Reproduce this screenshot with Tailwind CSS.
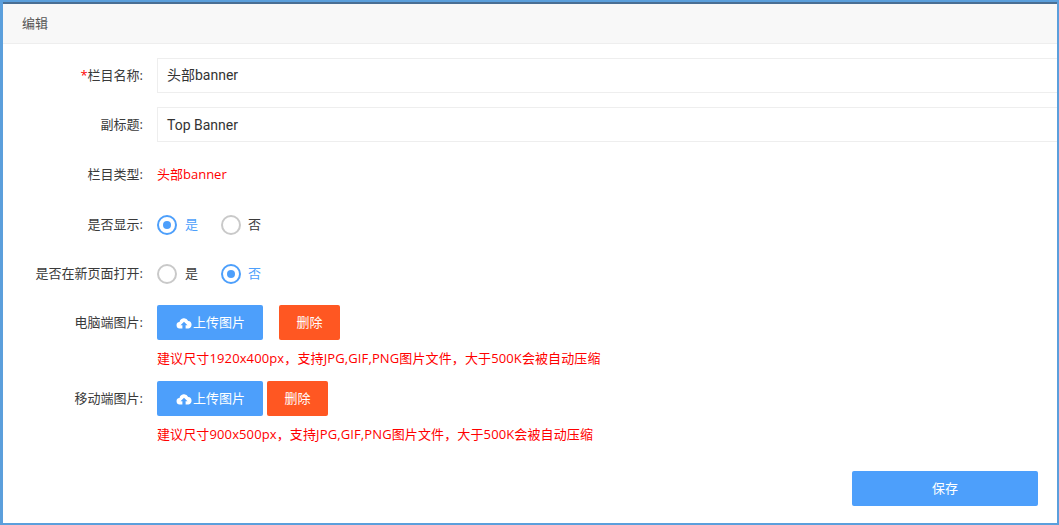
<!DOCTYPE html>
<html lang="zh-CN">
<head>
  <meta charset="UTF-8">
  <title>编辑</title>
  <script src="https://cdn.jsdelivr.net/npm/@tailwindcss/browser@4"></script>
</head>
<body class="bg-white overflow-hidden font-['Open_Sans','Noto_Sans_CJK_SC',sans-serif] text-[13px] text-[#3a3a3a]">
  <div class="w-[1059px] h-[525px] overflow-hidden border-2 border-l-[3px] border-[#5b9fdc] flex flex-col">
    <div class="h-[42px] shrink-0 border-t-2 border-t-[#4a6f94] bg-[#f8f8f8] border-b border-b-[#eeeeee] pl-[19px] flex items-center text-[#555]">编辑</div>
    <div class="flex flex-col pt-[14px]">
      <!-- name -->
      <div class="flex items-center h-[35px]">
        <label class="w-[140px] text-right shrink-0"><span class="text-[#ff0000]">*</span>栏目名称:</label>
        <div class="ml-[14px] flex-1 h-full border border-[#eeeeee] border-r-0 flex items-center pl-[9px] text-[14px] text-[#333] font-['Roboto','Noto_Sans_CJK_SC',sans-serif]">头部banner</div>
      </div>
      <div class="flex items-center h-[35px] mt-[14px]">
        <label class="w-[140px] text-right shrink-0">副标题:</label>
        <div class="ml-[14px] flex-1 h-full border border-[#eeeeee] border-r-0 flex items-center pl-[9px] pt-[2px] text-[14px] text-[#333] font-['Roboto','Noto_Sans_CJK_SC',sans-serif]">Top Banner</div>
      </div>
      <!-- type -->
      <div class="flex items-center h-[35px] mt-[15px]">
        <label class="w-[140px] text-right shrink-0">栏目类型:</label>
        <div class="ml-[14px] text-[#ff0000]">头部banner</div>
      </div>
      <!-- show -->
      <div class="flex items-center h-[20px] mt-[23px]">
        <label class="w-[140px] text-right shrink-0">是否显示:</label>
        <div class="ml-[14px] flex items-center">
          <span class="w-[20px] h-[20px] rounded-full border-2 border-[#4d9ffb] flex items-center justify-center"><span class="w-[8px] h-[8px] rounded-full bg-[#4d9ffb]"></span></span>
          <span class="ml-[8px] text-[#4d9ffb]">是</span>
          <span class="ml-[23px] w-[20px] h-[20px] rounded-full border-2 border-[#c9c9c9]"></span>
          <span class="ml-[7px]">否</span>
        </div>
      </div>
      <!-- new page -->
      <div class="flex items-center h-[20px] mt-[29px]">
        <label class="w-[140px] text-right shrink-0">是否在新页面打开:</label>
        <div class="ml-[14px] flex items-center">
          <span class="w-[20px] h-[20px] rounded-full border-2 border-[#c9c9c9]"></span>
          <span class="ml-[8px]">是</span>
          <span class="ml-[23px] w-[20px] h-[20px] rounded-full border-2 border-[#4d9ffb] flex items-center justify-center"><span class="w-[8px] h-[8px] rounded-full bg-[#4d9ffb]"></span></span>
          <span class="ml-[7px] text-[#4d9ffb]">否</span>
        </div>
      </div>
      <!-- pc image -->
      <div class="flex items-center h-[35px] mt-[21px]">
        <label class="w-[140px] text-right shrink-0">电脑端图片:</label>
        <button class="ml-[14px] w-[106px] h-[35px] rounded-[2px] bg-[#4d9ffb] text-white flex items-center justify-center pl-[1px]">
          <svg class="w-[16px] h-[16px]" viewBox="0 0 16 16"><path fill="#fff" d="M4 13.5a3.2 3.2 0 0 1-.5-6.4A4.6 4.6 0 0 1 12.2 6a3.8 3.8 0 0 1 .3 7.5H9.6v-3.2h1.9L8 6.8l-3.5 3.5h1.9v3.2z"/></svg>
          <span class="ml-[1px]">上传图片</span>
        </button>
        <button class="ml-[16px] w-[61px] h-[35px] rounded-[2px] bg-[#ff5722] text-white">删除</button>
      </div>
      <p class="ml-[154px] mt-[9px] leading-[18px] tracking-[0.12px] text-[#ff0000]">建议尺寸1920x400px，支持JPG,GIF,PNG图片文件，大于500K会被自动压缩</p>
      <!-- mobile image -->
      <div class="flex items-center h-[35px] mt-[14px]">
        <label class="w-[140px] text-right shrink-0">移动端图片:</label>
        <button class="ml-[14px] w-[106px] h-[35px] rounded-[2px] bg-[#4d9ffb] text-white flex items-center justify-center pl-[1px]">
          <svg class="w-[16px] h-[16px]" viewBox="0 0 16 16"><path fill="#fff" d="M4 13.5a3.2 3.2 0 0 1-.5-6.4A4.6 4.6 0 0 1 12.2 6a3.8 3.8 0 0 1 .3 7.5H9.6v-3.2h1.9L8 6.8l-3.5 3.5h1.9v3.2z"/></svg>
          <span class="ml-[1px]">上传图片</span>
        </button>
        <button class="ml-[4px] w-[61px] h-[35px] rounded-[2px] bg-[#ff5722] text-white">删除</button>
      </div>
      <p class="ml-[154px] mt-[9px] leading-[18px] tracking-[0.12px] text-[#ff0000]">建议尺寸900x500px，支持JPG,GIF,PNG图片文件，大于500K会被自动压缩</p>
      <div class="flex justify-end mt-[28px] pr-[19px]">
        <button class="w-[186px] h-[35px] rounded-[2px] bg-[#4d9ffb] text-white">保存</button>
      </div>
    </div>
  </div>
</body>
</html>
